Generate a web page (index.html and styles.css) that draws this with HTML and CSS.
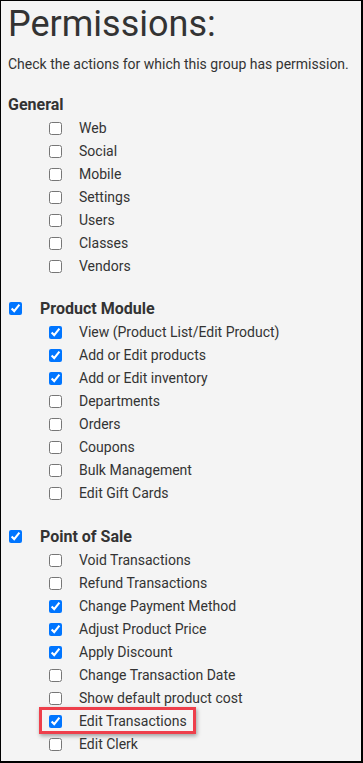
FILE: index.html
```html
<!DOCTYPE html>
<html lang="en">
<head>
<meta charset="utf-8">
<title>Permissions</title>
<link rel="stylesheet" href="styles.css">
</head>
<body>
<div class="panel">
  <h1 class="title">Permissions:</h1>
  <p class="intro">Check the actions for which this group has permission.</p>

  <section class="group first">
    <div class="group-head"><span class="group-name">General</span></div>
    <label class="item"><input type="checkbox"><span>Web</span></label>
    <label class="item"><input type="checkbox"><span>Social</span></label>
    <label class="item"><input type="checkbox"><span>Mobile</span></label>
    <label class="item"><input type="checkbox"><span>Settings</span></label>
    <label class="item"><input type="checkbox"><span>Users</span></label>
    <label class="item"><input type="checkbox"><span>Classes</span></label>
    <label class="item"><input type="checkbox"><span>Vendors</span></label>
  </section>

  <section class="group">
    <label class="group-head"><input type="checkbox" checked><span class="group-name">Product Module</span></label>
    <label class="item"><input type="checkbox" checked><span>View (Product List/Edit Product)</span></label>
    <label class="item"><input type="checkbox" checked><span>Add or Edit products</span></label>
    <label class="item"><input type="checkbox" checked><span>Add or Edit inventory</span></label>
    <label class="item"><input type="checkbox"><span>Departments</span></label>
    <label class="item"><input type="checkbox"><span>Orders</span></label>
    <label class="item"><input type="checkbox"><span>Coupons</span></label>
    <label class="item"><input type="checkbox"><span>Bulk Management</span></label>
    <label class="item"><input type="checkbox"><span>Edit Gift Cards</span></label>
  </section>

  <section class="group">
    <label class="group-head"><input type="checkbox" checked><span class="group-name">Point of Sale</span></label>
    <label class="item"><input type="checkbox"><span>Void Transactions</span></label>
    <label class="item"><input type="checkbox"><span>Refund Transactions</span></label>
    <label class="item"><input type="checkbox" checked><span>Change Payment Method</span></label>
    <label class="item"><input type="checkbox" checked><span>Adjust Product Price</span></label>
    <label class="item"><input type="checkbox" checked><span>Apply Discount</span></label>
    <label class="item"><input type="checkbox"><span>Change Transaction Date</span></label>
    <label class="item"><input type="checkbox"><span>Show default product cost</span></label>
    <label class="item highlighted"><input type="checkbox" checked><span>Edit Transactions</span></label>
    <label class="item"><input type="checkbox"><span>Edit Clerk</span></label>
  </section>
</div>
</body>
</html>
```

FILE: styles.css
```css
*, *::before, *::after { box-sizing: border-box; }

html, body {
  margin: 0;
  padding: 0;
  background: #f4f4f4;
}

body {
  font-family: Roboto, "Liberation Sans", Arial, sans-serif;
  color: #333;
}

.panel {
  width: 363px;
  height: 763px;
  border-style: solid;
  border-color: #000;
  border-width: 1px 2px 2px 1px;
  background: #f4f4f4;
  padding: 2px 0 0 7px;
  overflow: hidden;
}

.title {
  margin: 0;
  font-size: 36px;
  font-weight: 400;
  line-height: 42px;
  color: #333;
}

.intro {
  margin: 9px 0 0 0;
  font-size: 14px;
  line-height: 20px;
  color: #333;
}

.group {
  display: flex;
  flex-direction: column;
  margin-top: 18.5px;
}

.group.first {
  margin-top: 17.5px;
}

.group-head {
  display: flex;
  align-items: center;
  height: 25px;
}

.group-name {
  font-size: 16px;
  font-weight: 700;
  line-height: 25px;
  color: #333;
}

.group-head input {
  margin: 0 18px 0 1px;
}

.item {
  position: relative;
  display: flex;
  align-items: center;
  height: 23px;
  padding-left: 41px;
  font-size: 14px;
  line-height: 23px;
  color: #333;
}

.item input {
  margin: 0 17px 0 0;
}

input[type="checkbox"] {
  width: 13px;
  height: 13px;
  flex: none;
  accent-color: #0075ff;
}

.highlighted::after {
  content: "";
  position: absolute;
  left: 31px;
  top: -3px;
  width: 157px;
  height: 27px;
  border: 3px solid #ee3f4b;
  box-shadow: 1px 2px 4px rgba(0, 0, 0, 0.35);
  pointer-events: none;
}
```
